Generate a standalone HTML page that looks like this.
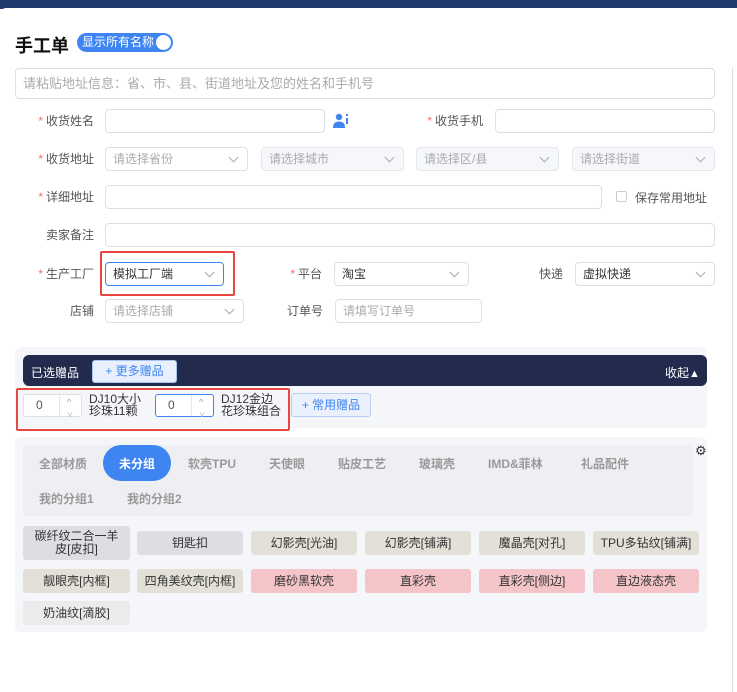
<!DOCTYPE html>
<html><head><meta charset="utf-8"><style>
*{box-sizing:border-box;margin:0;padding:0}
body{width:737px;height:692px;overflow:hidden;background:#fff;font-family:"Liberation Sans","Noto Sans CJK SC",sans-serif;font-size:12px;color:#333;position:relative}
.a{position:absolute}
.inp{position:absolute;border:1px solid #dcdfe6;border-radius:4px;background:#fff;height:24px;color:#aaa;font-size:12px;line-height:22px;padding-left:7px}
.dis{background:#f5f7fa;border-color:#e4e7ed}
.sel::after{content:"";position:absolute;right:10px;top:6px;width:6px;height:6px;border-right:1px solid #aaa;border-bottom:1px solid #aaa;transform:rotate(45deg)}
.lb{position:absolute;font-size:12px;color:#555;text-align:right;line-height:24px}
.lb b{color:#f56c6c;font-weight:normal;margin-right:3px}
.tab{position:absolute;font-size:12px;font-weight:bold;color:#999;line-height:20px}
.bt{position:absolute;height:24px;border-radius:3px;font-size:12px;color:#333;text-align:center;line-height:24px}
.g{background:#dcdee3}.y{background:#e2e0d7}.p{background:#f4c4c8}.w{background:#ebebeb}
.num{position:absolute;width:59px;height:23px;border:1px solid #dcdfe6;border-radius:3px;background:#fff;font-size:12px;color:#555;line-height:21px;padding-left:12px}
.num i{position:absolute;right:0;top:0;width:22px;height:21px;border-left:1px solid #e4e7ed;font-style:normal}
.num i::before{content:"^";position:absolute;left:7px;top:-3px;font-size:9px;color:#999}
.num i::after{content:"v";position:absolute;left:8px;top:9px;font-size:8px;color:#bbb}
</style></head><body>
<div class="a" style="left:0;top:0;width:737px;height:9px;background:#233a6e"></div>
<div class="a" style="left:0;top:8px;width:737px;height:684px;background:#fff;border-radius:6px 0 0 0"></div>
<div class="a" style="left:732px;top:68px;width:1px;height:624px;background:#ddd"></div>
<div class="a" style="left:15px;top:32px;font-size:18px;font-weight:bold;color:#111">手工单</div>
<div class="a" style="left:77px;top:33px;width:96px;height:19px;border-radius:10px;background:#3f85f2;color:#fff;font-size:12px;line-height:19px;padding-left:5px">显示所有名称<span class="a" style="right:2px;top:2px;width:15px;height:15px;border-radius:50%;background:#fff"></span></div>
<div class="inp" style="left:15px;top:68px;width:700px;height:31px;line-height:29px;font-size:13px;color:#aaa">请粘贴地址信息：省、市、县、街道地址及您的姓名和手机号</div>

<div class="lb" style="left:20px;top:109px;width:74px"><b>*</b>收货姓名</div>
<div class="inp" style="left:105px;top:109px;width:220px"></div>
<svg class="a" style="left:333px;top:113px" width="16" height="16" viewBox="0 0 16 16"><circle cx="6" cy="4" r="3.2" fill="#3f85f2"/><path d="M0 15c0-5 2.5-6.5 6-6.5s6 1.5 6 6.5z" fill="#3f85f2"/><rect x="13" y="1" width="2" height="2" fill="#3f85f2"/><rect x="13" y="5" width="2" height="6" fill="#3f85f2"/></svg>
<div class="lb" style="left:400px;top:109px;width:83px"><b>*</b>收货手机</div>
<div class="inp" style="left:495px;top:109px;width:220px"></div>

<div class="lb" style="left:20px;top:147px;width:74px"><b>*</b>收货地址</div>
<div class="inp sel" style="left:105px;top:147px;width:143px">请选择省份</div>
<div class="inp sel dis" style="left:261px;top:147px;width:143px">请选择城市</div>
<div class="inp sel dis" style="left:416px;top:147px;width:143px">请选择区/县</div>
<div class="inp sel dis" style="left:572px;top:147px;width:143px">请选择街道</div>

<div class="lb" style="left:20px;top:185px;width:74px"><b>*</b>详细地址</div>
<div class="inp" style="left:105px;top:185px;width:497px"></div>
<div class="a" style="left:616px;top:191px;width:11px;height:11px;border:1px solid #ccc;border-radius:2px"></div>
<div class="a" style="left:635px;top:189px;color:#555">保存常用地址</div>

<div class="lb" style="left:20px;top:223px;width:74px">卖家备注</div>
<div class="inp" style="left:105px;top:223px;width:610px"></div>

<div class="lb" style="left:20px;top:262px;width:74px"><b>*</b>生产工厂</div>
<div class="inp sel" style="left:105px;top:262px;width:119px;border-color:#3f85f2;color:#333">模拟工厂端</div>
<div class="a" style="left:100px;top:251px;width:135px;height:45px;border:2px solid #e8473f;border-radius:2px"></div>
<div class="lb" style="left:270px;top:262px;width:52px"><b>*</b>平台</div>
<div class="inp sel" style="left:334px;top:262px;width:135px;color:#333">淘宝</div>
<div class="lb" style="left:520px;top:262px;width:43px">快递</div>
<div class="inp sel" style="left:575px;top:262px;width:140px;color:#333">虚拟快递</div>

<div class="lb" style="left:20px;top:299px;width:74px">店铺</div>
<div class="inp sel" style="left:105px;top:299px;width:139px">请选择店铺</div>
<div class="lb" style="left:270px;top:299px;width:53px">订单号</div>
<div class="inp" style="left:335px;top:299px;width:147px">请填写订单号</div>

<div class="a" style="left:15px;top:347px;width:692px;height:81px;background:#f5f6fa;border-radius:6px"></div>
<div class="a" style="left:23px;top:355px;width:684px;height:31px;background:#222b4d;border-radius:6px"></div>
<div class="a" style="left:31px;top:364px;color:#fff">已选赠品</div>
<div class="a" style="left:92px;top:360px;width:85px;height:23px;background:#e8f0fe;border:1px solid #a8c4f2;border-radius:3px;color:#3f85f2;text-align:center;line-height:21px">+ 更多赠品</div>
<div class="a" style="left:665px;top:364px;color:#fff">收起<span style="font-size:11px">▲</span></div>
<div class="num" style="left:23px;top:394px">0<i></i></div>
<div class="a" style="left:89px;top:393px;font-size:12px;line-height:12px;color:#333">DJ10大小<br>珍珠11颗</div>
<div class="num" style="left:155px;top:394px;border-color:#3f85f2">0<i></i></div>
<div class="a" style="left:221px;top:393px;font-size:12px;line-height:12px;color:#333">DJ12金边<br>花珍珠组合</div>
<div class="a" style="left:16px;top:388px;width:274px;height:43px;border:2px solid #e8473f;border-radius:2px"></div>
<div class="a" style="left:291px;top:393px;width:80px;height:24px;background:#eaf1fd;border:1px solid #b7cff5;border-radius:3px;color:#3f85f2;text-align:center;line-height:22px">+ 常用赠品</div>

<div class="a" style="left:15px;top:437px;width:692px;height:195px;background:#f5f6fa;border-radius:6px"></div>
<div class="a" style="left:23px;top:445px;width:670px;height:71px;background:#eeeff2;border-radius:4px"></div>
<div class="a" style="left:103px;top:445px;width:68px;height:36px;background:#3f85f2;border-radius:18px"></div>
<div class="tab" style="left:39px;top:454px">全部材质</div>
<div class="tab" style="left:119px;top:454px;color:#fff">未分组</div>
<div class="tab" style="left:188px;top:454px">软壳TPU</div>
<div class="tab" style="left:269px;top:454px">天使眼</div>
<div class="tab" style="left:338px;top:454px">贴皮工艺</div>
<div class="tab" style="left:419px;top:454px">玻璃壳</div>
<div class="tab" style="left:488px;top:454px">IMD&amp;菲林</div>
<div class="tab" style="left:581px;top:454px">礼品配件</div>
<div class="tab" style="left:39px;top:489px">我的分组1</div>
<div class="tab" style="left:127px;top:489px">我的分组2</div>
<div class="a" style="left:695px;top:443px;font-size:13px;color:#333">⚙</div>

<div class="bt g" style="left:23px;top:526px;width:107px;height:34px;line-height:13px;padding-top:4px">碳纤纹二合一羊<br>皮[皮扣]</div>
<div class="bt g" style="left:137px;top:531px;width:106px">钥匙扣</div>
<div class="bt y" style="left:251px;top:531px;width:106px">幻影壳[光油]</div>
<div class="bt y" style="left:365px;top:531px;width:106px">幻影壳[铺满]</div>
<div class="bt y" style="left:479px;top:531px;width:106px">魔晶壳[对孔]</div>
<div class="bt y" style="left:593px;top:531px;width:106px">TPU多钻纹[铺满]</div>
<div class="bt y" style="left:23px;top:569px;width:107px">靓眼壳[内框]</div>
<div class="bt y" style="left:137px;top:569px;width:106px">四角美纹壳[内框]</div>
<div class="bt p" style="left:251px;top:569px;width:106px">磨砂黑软壳</div>
<div class="bt p" style="left:365px;top:569px;width:106px">直彩壳</div>
<div class="bt p" style="left:479px;top:569px;width:106px">直彩壳[侧边]</div>
<div class="bt p" style="left:593px;top:569px;width:106px">直边液态壳</div>
<div class="bt w" style="left:23px;top:601px;width:107px">奶油纹[滴胶]</div>
</body></html>
